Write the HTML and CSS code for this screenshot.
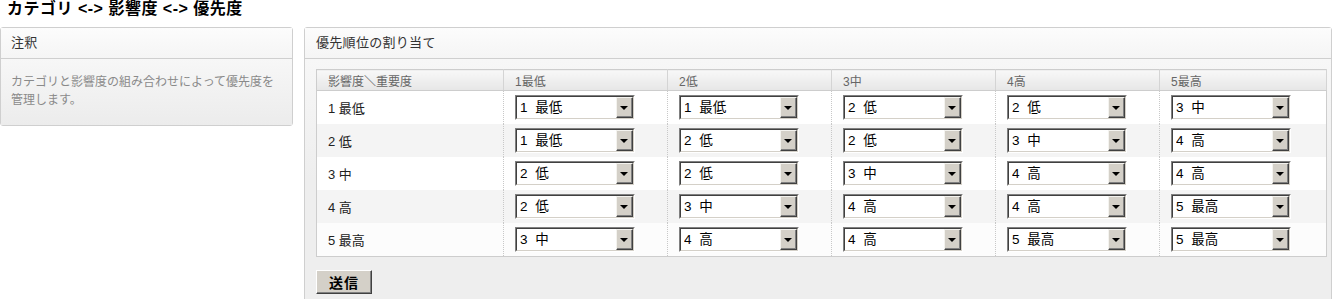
FILE: index.html
```html
<!DOCTYPE html>
<html lang="ja">
<head>
  <meta charset="UTF-8" />
  <title>カテゴリ &lt;-&gt; 影響度 &lt;-&gt; 優先度</title>
  <link rel="stylesheet" href="styles.css">
</head>
<body>
  <h1 class="page-title">カテゴリ &lt;-&gt; 影響度 &lt;-&gt; 優先度</h1>
  <div class="layout">
    <div class="box side">
      <div class="box-head">注釈</div>
      <div class="box-body note">カテゴリと影響度の組み合わせによって優先度を管理します。</div>
    </div>
    <div class="box main">
      <div class="box-head">優先順位の割り当て</div>
      <div class="box-body">
        <form onsubmit="return false">
          <table class="matrix">
            <colgroup>
              <col class="c-first"><col class="c-mid"><col class="c-mid"><col class="c-mid"><col class="c-mid"><col>
            </colgroup>
            <thead>
              <tr>
                <th>影響度＼重要度</th>
                <th>1最低</th>
                <th>2低</th>
                <th>3中</th>
                <th>4高</th>
                <th>5最高</th>
              </tr>
            </thead>
            <tbody id="rows"></tbody>
          </table>
          <button class="send" type="submit">送信</button>
        </form>
      </div>
    </div>
  </div>

  <script>
    const levels = ["1 最低", "2 低", "3 中", "4 高", "5 最高"];
    const labels = ["1 最低", "2 低", "3 中", "4 高", "5 最高"];
    // 行 = 影響度, 列 = 重要度 (値は levels の番号)
    const grid = [
      [0, 0, 1, 1, 2],
      [0, 1, 1, 2, 3],
      [1, 1, 2, 3, 3],
      [1, 2, 3, 3, 4],
      [2, 3, 3, 4, 4]
    ];

    const tbody = document.getElementById("rows");

    grid.forEach((row, i) => {
      const tr = document.createElement("tr");
      const th = document.createElement("td");
      th.className = "row-label";
      th.textContent = labels[i];
      tr.appendChild(th);

      row.forEach((value, j) => {
        const td = document.createElement("td");
        const wrap = document.createElement("span");
        wrap.className = "pick";
        const select = document.createElement("select");
        select.name = "priority[" + i + "][" + j + "]";
        levels.forEach((text, k) => {
          const opt = document.createElement("option");
          opt.value = k + 1;
          opt.textContent = text;
          if (k === value) opt.selected = true;
          select.appendChild(opt);
        });
        wrap.appendChild(select);
        td.appendChild(wrap);
        tr.appendChild(td);
      });

      tbody.appendChild(tr);
    });
  </script>
</body>
</html>
```

FILE: styles.css
```css
body {
  margin: 0;
  background: #fff;
  color: #333;
  font-family: "Liberation Sans", "Noto Sans CJK JP", sans-serif;
}
.page-title {
  margin: 0;
  padding: 0 7px;
  font-size: 16px;
  line-height: 18px;
  letter-spacing: 0.5px;
  color: #000;
}
.layout {
  display: flex;
  align-items: flex-start;
  gap: 11px;
  margin-top: 9px;
}
.box {
  box-sizing: border-box;
  border: 1px solid #cfcfcf;
  border-radius: 3px;
  background: #f3f3f3;
}
.side {
  width: 293px;
  flex: none;
}
.main {
  flex: 1;
  min-width: 0;
  border-radius: 3px 3px 0 0;
}
.box-head {
  height: 30px;
  line-height: 30px;
  padding: 0 10px;
  font-size: 13px;
  color: #333;
  background: linear-gradient(#fcfcfc, #f5f5f5);
  border-bottom: 1px solid #cfcfcf;
  letter-spacing: 0.3px;
}
.main .box-head {
  padding-left: 11px;
}
.box-body {
  padding: 10px 4px 6px 11px;
  background: linear-gradient(#f7f7f7, #eeeeee 120px, #eeeeee);
}
.note {
  padding: 14px 10px 16px 10px;
  font-size: 12px;
  line-height: 18px;
  color: #8a8a8a;
  background: linear-gradient(#f7f7f7, #ececec);
}
.matrix {
  width: 100%;
  table-layout: fixed;
  border-collapse: collapse;
  border: 1px solid #cdcdcd;
}
.c-first { width: 187px; }
.c-mid { width: 164px; }
.matrix th {
  height: 20px;
  padding: 0 11px;
  text-align: left;
  font-weight: normal;
  font-size: 12px;
  color: #666;
  background: linear-gradient(#f8f8f8, #e6e6e6);
  border-right: 1px solid #d4d4d4;
  border-bottom: 1px solid #cdcdcd;
}
.matrix td {
  height: 33px;
  padding: 0 11px;
  vertical-align: middle;
  border-left: 1px dotted #c8c8c8;
  background: #fff;
}
.matrix tbody tr:nth-child(even) td {
  background: #f4f4f4;
}
.matrix tbody tr:last-child td {
  background: #fcfcfc;
}
.row-label {
  font-size: 13px;
  color: #222;
}
.pick {
  position: relative;
  display: inline-block;
  box-sizing: border-box;
  width: 120px;
  height: 25px;
  border: 1px solid;
  border-color: #808080 #fff #fff #808080;
  vertical-align: middle;
}
.pick select {
  appearance: none;
  -webkit-appearance: none;
  display: block;
  box-sizing: border-box;
  width: 100%;
  height: 100%;
  margin: 0;
  padding: 0 0 0 3px;
  border: 1px solid;
  border-color: #404040 #d4d0c8 #d4d0c8 #404040;
  border-radius: 0;
  background: #fff;
  color: #000;
  font-family: "Liberation Sans", "Noto Sans CJK JP", sans-serif;
  font-size: 13.5px;
  word-spacing: 4px;
  outline: none;
}
.pick::before {
  content: "";
  position: absolute;
  top: 1px;
  right: 1px;
  bottom: 1px;
  width: 17px;
  box-sizing: border-box;
  background: #d4d0c8;
  border: 1px solid;
  border-color: #f4f3ef #404040 #404040 #f4f3ef;
  box-shadow: inset -1px -1px #808080;
  pointer-events: none;
}
.pick::after {
  content: "";
  position: absolute;
  top: 10px;
  right: 6px;
  border-top: 4px solid #000;
  border-left: 4px solid transparent;
  border-right: 4px solid transparent;
  pointer-events: none;
}
.send {
  display: block;
  margin-top: 13px;
  width: 56px;
  height: 24px;
  padding: 0;
  font-family: "Liberation Sans", "Noto Sans CJK JP", sans-serif;
  font-weight: bold;
  font-size: 14px;
  letter-spacing: 1px;
  color: #000;
  background: #d4d0c8;
  border: 1px solid;
  border-color: #fff #404040 #404040 #fff;
  box-shadow: inset -1px -1px #808080;
  border-radius: 0;
  cursor: pointer;
}
```
